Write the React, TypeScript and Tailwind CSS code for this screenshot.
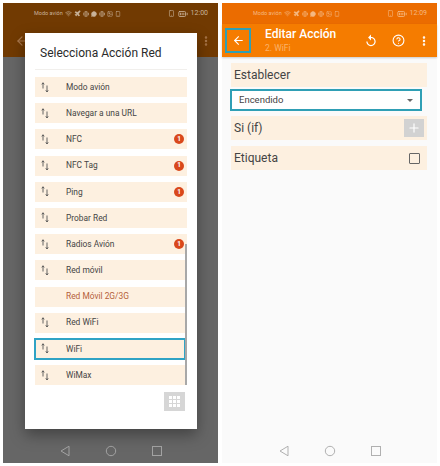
import React from 'react';
import { ArrowLeft, BatteryFull, CircleHelp, EllipsisVertical, Globe, Image, MessageCircle, Plane, Plus, Smartphone, Wifi } from 'lucide-react';

const rows = [
  { name: 'Modo avión' },
  { name: 'Navegar a una URL' },
  { name: 'NFC', badge: true },
  { name: 'NFC Tag', badge: true },
  { name: 'Ping', badge: true },
  { name: 'Probar Red' },
  { name: 'Radios Avión', badge: true },
  { name: 'Red móvil' },
  { name: 'Red Móvil 2G/3G', disabled: true },
  { name: 'Red WiFi' },
  { name: 'WiFi', selected: true },
  { name: 'WiMax' },
];

function UpDownIcon() {
  return (
    <svg width="8" height="11" viewBox="0 0 8 11" fill="none" stroke="#555" strokeWidth="0.9">
      <path d="M2 6.5V1M0.8 2.4 2 .7l1.2 1.7" />
      <path d="M6 3.5V10M4.8 8.3 6 10l1.2-1.7" />
    </svg>
  );
}

function StatusBar({ time, color, bg }: { time: string; color: string; bg: string }) {
  return (
    <div className={`flex h-[21px] items-center pl-[31px] pr-[10px] ${bg} ${color}`}>
      <span className="text-[5.5px] leading-none">Modo avión</span>
      <div className="ml-[2px] flex items-center gap-[2px]">
        <Wifi size={7} />
        <Plane size={7} fill="currentColor" />
        <Globe size={6} />
        <MessageCircle size={6} fill="currentColor" />
        <Globe size={6} />
        <Image size={6} />
        <Smartphone size={6} />
      </div>
      <div className="ml-auto flex items-center gap-[3px]">
        <Smartphone size={7} />
        <BatteryFull size={10} />
        <span className="text-[7px] leading-none">{time}</span>
      </div>
    </div>
  );
}

function NavBar({ color }: { color: string }) {
  return (
    <div className={`flex h-[24px] items-center justify-center gap-[34px] pb-[1px] ${color}`}>
      <svg width="12" height="12" viewBox="0 0 12 12" fill="none" stroke="currentColor" strokeWidth="1">
        <path d="M10 1.2 2 6l8 4.8z" />
      </svg>
      <svg width="12" height="12" viewBox="0 0 12 12" fill="none" stroke="currentColor" strokeWidth="1">
        <circle cx="6" cy="6" r="4.7" />
      </svg>
      <svg width="12" height="12" viewBox="0 0 12 12" fill="none" stroke="currentColor" strokeWidth="1">
        <rect x="1.5" y="1.5" width="9" height="9" />
      </svg>
    </div>
  );
}

function Dialog() {
  return (
    <div className="absolute left-[22px] top-[30px] flex h-[396px] w-[172px] flex-col bg-white px-[10px] shadow-[0_6px_14px_rgba(0,0,0,0.35)]">
      <div className="flex h-[37px] items-end border-b border-[#f1efec] pb-[10px] pl-[5px] text-[12px] leading-none text-[#2b2b2b]">
        Selecciona Acción Red
      </div>
      <div className="relative mt-[7px] flex flex-col gap-[6.2px]">
        {rows.map((row) => (
          <div
            key={row.name}
            className={`flex h-[20px] items-center bg-[#fdf0e0] ${row.selected ? 'mr-[2px] outline-2 -outline-offset-1 outline-[#2fa3c5]' : ''}`}
          >
            <div className="flex w-[31px] pl-[6px]">{!row.disabled && <UpDownIcon />}</div>
            <span className={`text-[8.4px] leading-none ${row.disabled ? 'text-[#b5603a]' : 'text-[#444]'}`}>{row.name}</span>
            {row.badge && (
              <span className="ml-auto mr-[3px] flex h-[10px] w-[10px] items-center justify-center rounded-full bg-[#d9481c] text-[6.5px] font-bold leading-none text-white">
                1
              </span>
            )}
          </div>
        ))}
        <div className="absolute right-0 top-[167px] h-[141px] w-[2px] bg-[#a8a8a8]" />
      </div>
      <div className="mt-[7px] flex justify-end pr-[2px]">
        <div className="grid h-[19px] w-[21px] grid-cols-3 gap-[1px] bg-[#d6d6d6] px-[5px] py-[4px]">
          {Array.from({ length: 9 }).map((_, i) => (
            <span key={i} className="bg-white" />
          ))}
        </div>
      </div>
    </div>
  );
}

export default function App() {
  return (
    <div className="flex h-[466px] w-[440px] gap-[4px] bg-white p-[3px] font-['Roboto',sans-serif]">
      <div className="relative flex w-[215px] flex-col bg-[#666]">
        <StatusBar time="12:00" color="text-[#c9b39a]" bg="bg-[#713a02]" />
        <div className="flex h-[33px] items-center justify-between bg-[#713a02] pl-[12px] pr-[6px] text-[#a8764a]">
          <ArrowLeft size={14} />
          <EllipsisVertical size={12} strokeWidth={3} />
        </div>
        <div className="flex-1" />
        <NavBar color="text-[#a3a3a3]" />
        <Dialog />
      </div>

      <div className="flex w-[215px] flex-col bg-[#fafafa]">
        <StatusBar time="12:09" color="text-[#f5b982]" bg="bg-[#eb6c00]" />
        <div className="flex h-[33px] items-center bg-[#f57c00] pl-[3px] text-white shadow-[0_1px_2px_rgba(0,0,0,0.2)]">
          <div className="flex h-[25px] w-[26px] items-center justify-center border-2 border-[#2f9fb5]">
            <ArrowLeft size={13} />
          </div>
          <div className="ml-[14px] flex flex-col gap-[4px]">
            <span className="text-[12px] font-medium leading-none">Editar Acción</span>
            <span className="text-[8.5px] leading-none text-[#fbb36b]">2. WiFi</span>
          </div>
          <svg width="14" height="14" viewBox="0 0 24 24" fill="currentColor" className="ml-auto">
            <path d="M12 5V1L7 6l5 5V7c3.31 0 6 2.69 6 6s-2.69 6-6 6-6-2.69-6-6H4c0 4.42 3.58 8 8 8s8-3.58 8-8-3.58-8-8-8z" />
          </svg>
          <CircleHelp size={13} className="ml-[14px]" />
          <EllipsisVertical size={12} strokeWidth={3} className="ml-[13px] mr-[7px]" />
        </div>
        <div className="flex flex-1 flex-col pl-[9px] pr-[10px] pt-[6px]">
          <div className="flex h-[24px] items-center bg-[#fdf0e0] px-[3px] text-[12px] leading-none text-[#444]">Establecer</div>
          <div className="-ml-[1px] mr-[5px] mt-[2px] flex h-[22px] items-center justify-between border-2 border-[#2f9fb5] bg-white pl-[7px] pr-[7px] text-[9.5px] leading-none text-[#444]">
            Encendido
            <span className="h-0 w-0 border-x-[3px] border-t-[3px] border-x-transparent border-t-[#666]" />
          </div>
          <div className="mt-[5px] flex h-[24px] items-center justify-between bg-[#fdf0e0] pl-[3px] pr-[3px] text-[12px] leading-none text-[#444]">
            Si (if)
            <span className="flex h-[18px] w-[20px] items-center justify-center bg-[#d2d2d2] text-white">
              <Plus size={14} />
            </span>
          </div>
          <div className="mt-[6px] flex h-[24px] items-center justify-between bg-[#fdf0e0] pl-[3px] pr-[7px] text-[12px] leading-none text-[#444]">
            Etiqueta
            <span className="h-[11px] w-[11px] rounded-[1px] border border-[#666]" />
          </div>
        </div>
        <NavBar color="text-[#b0b0b0]" />
      </div>
    </div>
  );
}
